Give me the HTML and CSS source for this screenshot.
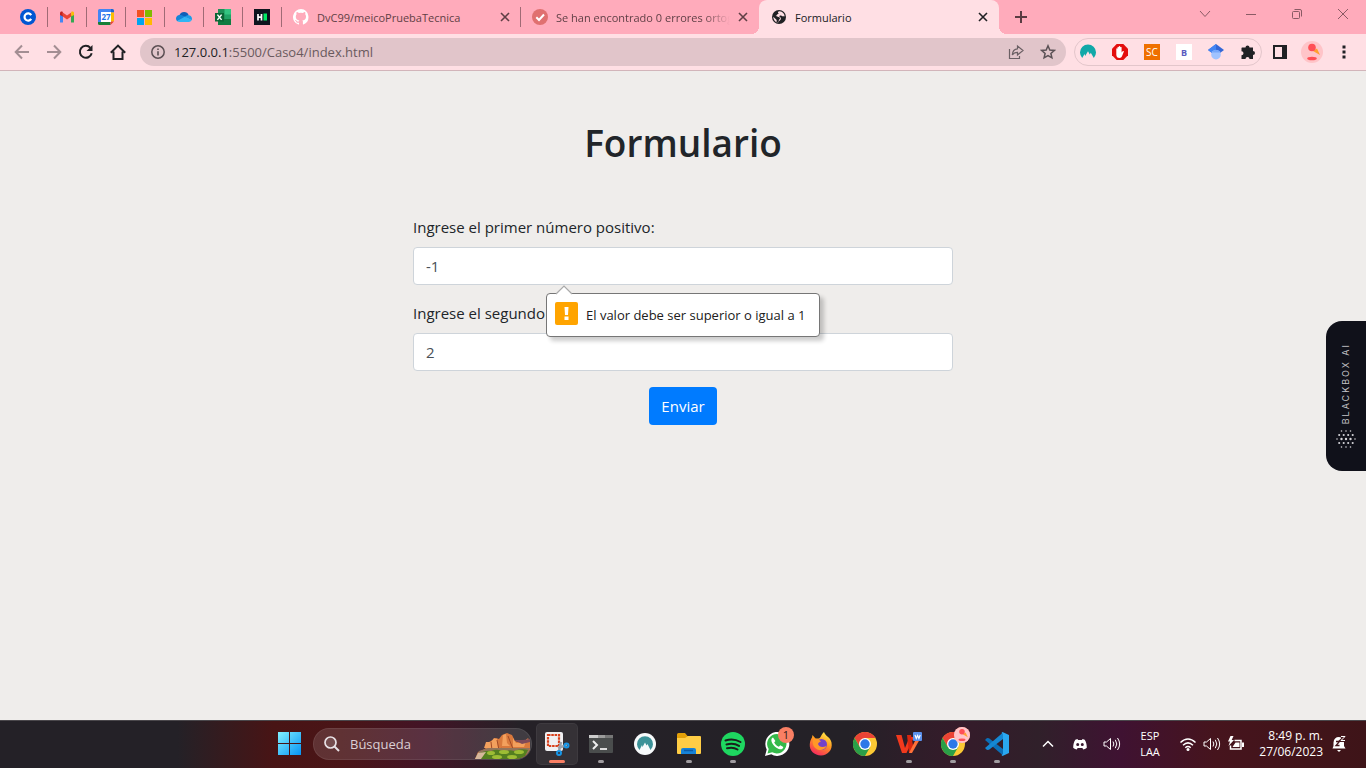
FILE: index.html
```html
<!DOCTYPE html>
<html lang="es">
<head>
<meta charset="utf-8">
<meta name="viewport" content="width=device-width, initial-scale=1">
<title>Formulario</title>
<link rel="stylesheet" href="styles.css">
</head>
<body>
<div class="desktop">

<header class="browser">
  <div class="tabs">
    <button class="pin" aria-label="Coursera"><svg width="16" height="16" viewBox="0 0 16 16"><circle cx="8" cy="8" r="8" fill="#0056d2"/><path d="M11.2 6.1A3.6 3.6 0 1 0 11.2 9.900" fill="none" stroke="#fff" stroke-width="2.200"/></svg></button>
    <button class="pin" aria-label="Gmail"><svg width="16" height="16" viewBox="0 0 16 16"><path d="M1 13.500V4l3 2.200v7.300z" fill="#4285f4"/><path d="M15 13.500V4l-3 2.200v7.300z" fill="#34a853"/><path d="M3.800 3.400 8 6.600l4.200-3.200v4L8 10.600 3.800 7.400z" fill="#ea4335"/><path d="M1 6V4c0-1.600 1.700-2 2.800-1.100v4.500z" fill="#c5221f"/><path d="M15 6V4c0-1.600-1.700-2-2.800-1.100v4.500z" fill="#fbbc04"/></svg></button>
    <button class="pin" aria-label="Calendar"><svg width="16" height="16" viewBox="0 0 16 16"><path d="M0 1.500A1.500 1.500 0 0 1 1.500 0H13v3.500H3.500V13H0z" fill="#4285f4"/><path d="M13 0h1.500A1.500 1.500 0 0 1 16 1.500V3.500h-3z" fill="#1967d2"/><path d="M12.500 3.500H16v9h-3.500z" fill="#fbbc04"/><path d="M0 13h12.500v3h-11A1.500 1.500 0 0 1 0 14.500z" fill="#188038"/><path d="M12.500 12.500H16L12.500 16z" fill="#ea4335"/><path d="M3 3h10v10H3z" fill="#fff"/><text x="8" y="11" text-anchor="middle" class="g-cal">27</text></svg></button>
    <button class="pin" aria-label="Microsoft"><svg width="16" height="16" viewBox="0 0 16 16"><path d="M0 1h7v7H0z" fill="#f25022"/><path d="M8 1h7v7H8z" fill="#7fba00"/><path d="M0 9h7v7H0z" fill="#00a4ef"/><path d="M8 9h7v7H8z" fill="#ffb900"/></svg></button>
    <button class="pin" aria-label="OneDrive"><svg width="16" height="16" viewBox="0 0 16 16"><path d="M3.500 6a5 5 0 0 1 9.200.2L9 9.500 2 11z" fill="#0f5fb8"/><path d="M3.700 6C1.500 6 0 7.700 0 9.600c0 1.200.6 2 1.300 2.700L10 8 6.500 6.500C5.500 6 4.700 6 3.700 6z" fill="#1484d7"/><path d="M12.600 6.200C14.500 6.300 16 7.800 16 9.700c0 .5-.2 1.100-.4 1.500L8.700 7.900c1.100-1 2-1.700 3.900-1.700z" fill="#1b9de8"/><path d="M8.700 7.800 15.700 11c-.6 1.200-1.600 2-3 2H3.800c-1 0-2-.4-2.600-.9z" fill="#31b5f4"/></svg></button>
    <button class="pin" aria-label="Excel"><svg width="16" height="16" viewBox="0 0 16 16"><path d="M3 0h7v16H3z" fill="#1d8f57"/><path d="M9.500 0H16v6H9.500z" fill="#33c481"/><path d="M3 5.500h6.500V10H3z" fill="#17804a"/><path d="M9.500 5.500H16V10H9.500z" fill="#21a366"/><path d="M3 10h13v6H3z" fill="#107c41"/><path d="M0 4h9v8.500H0z" fill="#0b6535"/><path d="m2.400 5.600 4.200 5.300M6.600 5.600l-4.200 5.300" stroke="#fff" stroke-width="1.500"/></svg></button>
    <button class="pin" aria-label="HackerRank"><svg width="16" height="16" viewBox="0 0 16 16"><path d="M0 0h16v16H0z" fill="#0e141e"/><path d="M4 5v6.500M7.500 5v6.500M4 8.200h3.500" stroke="#fff" stroke-width="1.700"/><path d="M9.500 4.500H13v7H9.500z" fill="#00ea64"/></svg></button>
    <div class="tab">
      <svg width="16" height="16" viewBox="0 0 16 16"><path fill="#fff" d="M8 0a8 8 0 0 0-2.500 15.600c.4.100.5-.2.500-.4v-1.500c-2 .5-2.600-.5-2.800-1-.1-.3-.5-1-.9-1.200-.3-.2-.7-.6 0-.6.600 0 1.100.6 1.200.8.700 1.200 1.900.9 2.400.7.100-.5.300-.9.500-1.100-1.800-.2-3.600-.9-3.600-3.900 0-.9.300-1.600.8-2.200-.1-.2-.4-1 .1-2.100 0 0 .7-.2 2.200.8a7.600 7.600 0 0 1 4 0c1.500-1 2.200-.8 2.200-.8.400 1.100.2 1.900.1 2.100.5.600.8 1.300.8 2.200 0 3.100-1.900 3.700-3.700 3.900.3.200.6.700.6 1.500v2.200c0 .2.100.5.500.4A8 8 0 0 0 8 0z"/></svg>
      <span class="tab-title">DvC99/meicoPruebaTecnica</span>
      <button class="x" aria-label="Cerrar pestaña"><svg width="10" height="10" viewBox="0 0 10 10"><path d="m1 1 8 8M9 1 1 9"/></svg></button>
    </div>
    <div class="tab no-line">
      <svg width="16" height="16" viewBox="0 0 16 16"><circle cx="8" cy="8" r="8" fill="#e07070"/><path d="m4.300 8.300 2.700 2.700 5-5.500" fill="none" stroke="#fff" stroke-width="2"/></svg>
      <span class="tab-title fade">Se han encontrado 0 errores ortográficos</span>
      <button class="x" aria-label="Cerrar pestaña"><svg width="10" height="10" viewBox="0 0 10 10"><path d="m1 1 8 8M9 1 1 9"/></svg></button>
    </div>
    <div class="tab active">
      <svg width="16" height="16" viewBox="0 0 16 16"><circle cx="8" cy="8" r="7" fill="#202124"/><path d="M8.600 2.300c-1.800.2-2 1.300-1.200 2 .8.700-.8 1.100-1.400 1.300.1 1-.8 1.200-1.600 1.200l3.800 1.400c1.400.5.800 1.800 0 2.400L7 13.500l-1.500-.5.200-2L2.300 7.700c0 3 2 5.600 4.800 6 .5-1 .6-1.500 1.700-2.200C10.600 10.400 10 8 8.200 7.500c.2-1 .6-.9 1.300-1 .9-.2 1.600.9 2.700.7.700-.1 1.200 0 1.500.2-.2-2.600-2-4.700-5.100-5.100z" fill="#ffdfe4"/></svg>
      <span class="tab-title">Formulario</span>
      <button class="x" aria-label="Cerrar pestaña"><svg width="10" height="10" viewBox="0 0 10 10"><path d="m1 1 8 8M9 1 1 9"/></svg></button>
    </div>
    <button class="new-tab" aria-label="Nueva pestaña"><svg width="12" height="12" viewBox="0 0 12 12"><path d="M6 0v12M0 6h12" stroke="#5a3c42" stroke-width="2"/></svg></button>
    <div class="window-buttons">
      <button aria-label="Buscar pestañas"><svg width="12" height="12" viewBox="0 0 12 12"><path d="m1 3 5 5.500L11 3"/></svg></button>
      <button aria-label="Minimizar"><svg width="12" height="12" viewBox="0 0 12 12"><path d="M1 6.500h10"/></svg></button>
      <button aria-label="Restaurar"><svg width="12" height="12" viewBox="0 0 12 12"><rect x="1.500" y="3.500" width="7" height="7" rx="1"/><path d="M3.500 1.500H9a1.500 1.500 0 0 1 1.500 1.500v5.500"/></svg></button>
      <button aria-label="Cerrar"><svg width="12" height="12" viewBox="0 0 12 12"><path d="m1 1 10 10M11 1 1 11"/></svg></button>
    </div>
  </div>

  <div class="toolbar">
    <button class="tool dim" aria-label="Atrás"><svg width="16" height="16" viewBox="0 0 16 16"><path d="M15 8H2M8 1.500 1.700 8 8 14.500"/></svg></button>
    <button class="tool dim" aria-label="Adelante"><svg width="16" height="16" viewBox="0 0 16 16"><path d="M1 8h13M8 1.500 14.300 8 8 14.500"/></svg></button>
    <button class="tool" aria-label="Recargar"><svg width="16" height="16" viewBox="0 0 16 16"><path d="M13.700 9.300A6 6 0 1 1 12.400 3.800"/><path d="M14.500 1v6h-6z" fill="#202124" stroke="none"/></svg></button>
    <button class="tool" aria-label="Inicio"><svg width="16" height="16" viewBox="0 0 16 16"><path d="M.8 8.800 8 1.600l7.200 7.200M3.500 7.500V15h9V7.500"/></svg></button>
    <div class="omnibox">
      <svg width="14" height="14" viewBox="0 0 14 14"><circle cx="7" cy="7" r="6.200" fill="none" stroke="#5b4f53" stroke-width="1.500"/><path d="M7 6.200v4.300M7 3.400v1.500" stroke="#5b4f53" stroke-width="1.600"/></svg>
      <a class="url" href="#"><span class="host">127.0.0.1</span>:5500/Caso4/index.html</a>
      <button aria-label="Compartir"><svg width="16" height="16" viewBox="0 0 16 16" fill="none" stroke="#6b6064" stroke-width="1.200"><path d="M1.500 5v9.500h10v-2.500"/><path d="M9.500 2v2.800C6 5 4.500 7.500 4.300 11c1.200-2 2.700-2.700 5.200-2.700V11L15 6.500z"/></svg></button>
      <button aria-label="Marcador"><svg width="16" height="16" viewBox="0 0 16 16" fill="none" stroke="#5b5155" stroke-width="1.500"><path d="m8 1.800 1.800 4.200 4.500.4-3.400 3 1 4.400L8 11.500l-3.900 2.300 1-4.400-3.400-3 4.500-.4z"/></svg></button>
    </div>
    <div class="extensions">
      <button aria-label="NordVPN"><svg width="16" height="16" viewBox="0 0 16 16"><path d="M2.200 14A8 8 0 1 1 13.800 14L10.800 8.800 9.800 10.500 8 7.200 5.200 12 4.600 10z" fill="#12a8a8"/></svg></button>
      <button aria-label="AdBlock"><svg width="16" height="16" viewBox="0 0 16 16"><path d="M4.700 0h6.600L16 4.700v6.600L11.300 16H4.700L0 11.300V4.700z" fill="#e40d0d"/><path d="M4.300 8.500V5c0-1 1.200-1 1.200 0V3.500c0-1 1.300-1 1.300 0v-.6c0-1.100 1.400-1.100 1.400 0v.6c0-1 1.400-1 1.400 0v5l1-1.200c.6-.8 1.500-.3 1.200.5l-1.600 4C9.600 13.500 8.700 14 7.500 14c-2 0-3.200-1.300-3.200-3.300z" fill="#fff"/></svg></button>
      <button class="ext-sc" aria-label="SC">SC</button>
      <button class="ext-b" aria-label="B">B</button>
      <button aria-label="Académico"><svg width="16" height="16" viewBox="0 0 16 16"><path d="M8 0 16 6l-4 3H4L0 6z" fill="#3367d6"/><path d="M8 0v9H4L0 6z" fill="#4285f4"/><circle cx="8" cy="10.700" r="4.800" fill="#a0c3ff"/><path d="M3.700 8.500a4.800 4.800 0 0 1 8.600 0z" fill="#76a7fa"/></svg></button>
      <button aria-label="Extensiones"><svg width="16" height="16" viewBox="0 0 16 16"><path d="M2 3.500h3.500a2 2 0 1 1 4 0H13V7a2 2 0 1 1 0 4v4H9.500a2 2 0 0 0-4 0H1.500v-3.700a2 2 0 0 0 0-4V4z" fill="#202124"/></svg></button>
    </div>
    <button class="tool" aria-label="Panel lateral"><svg width="16" height="16" viewBox="0 0 16 16"><path d="M2 2h12v12H2z"/><path d="M10 2h4v12h-4z" fill="#202124" stroke="none"/></svg></button>
    <button class="tool" aria-label="Perfil"><svg width="22" height="22" viewBox="0 0 22 22" stroke="none"><circle cx="11" cy="11" r="11" fill="#ffc4c8" stroke="none"/><path d="m12 10 4-2.500 3 6.500z" fill="#ffa02e" stroke="none"/><circle cx="11" cy="6.500" r="3.800" fill="#ff4f55" stroke="none"/><ellipse cx="11" cy="17.500" rx="4.800" ry="1.800" fill="#ff4f55" stroke="none"/></svg></button>
    <button class="tool" aria-label="Menú"><svg width="16" height="16" viewBox="0 0 16 16"><path d="M6.500 1.500h3v3h-3zM6.500 6.500h3v3h-3zM6.500 11.500h3v3h-3z" fill="#202124" stroke="none"/></svg></button>
  </div>
</header>

<main class="page">
  <h1>Formulario</h1>
  <form class="form" novalidate>
    <div class="field">
      <label for="n1">Ingrese el primer número positivo:</label>
      <input id="n1" type="number" min="1" value="-1">
      <div class="bubble" role="alert">
        <svg class="bubble-tip" width="18" height="10" viewBox="0 0 18 10"><path d="M0 10 9 1l9 9z" fill="#fff"/><path d="M1 9 9 1l8 8" fill="none" stroke="#a9a9a9" stroke-width="1.200"/></svg>
        <svg class="bubble-icon" width="23" height="23" viewBox="0 0 23 23"><rect width="23" height="23" rx="2" fill="#ffa400"/><path d="M9.500 5h4l-.5 8h-3zM9.500 14.500h4V18h-4z" fill="#fff"/></svg>
        <span>El valor debe ser superior o igual a 1</span>
      </div>
    </div>
    <div class="field">
      <label for="n2">Ingrese el segundo número positivo:</label>
      <input id="n2" type="number" min="1" value="2">
    </div>
    <button class="send" type="submit">Enviar</button>
  </form>
  <button class="blackbox">
    <span>BLACKBOX AI</span>
    <svg width="20" height="20" viewBox="0 0 20 20" fill="none" stroke="#d4d4d8" stroke-linecap="round"><path stroke-width="1.600" stroke-dasharray="0 4.500" d="M5.500 2h9.100M5.500 18h9.100"/><path stroke-width="2.100" stroke-dasharray="0 4.500" d="M3.200 6h13.600M3.200 14h13.600"/><path stroke-width="2.400" stroke-dasharray="0 4.500" d="M5.500 10h9.100"/><path stroke-width="1.600" stroke-dasharray="0 18" d="M1 10h18.100"/></svg>
  </button>
</main>

<footer class="taskbar">
  <nav class="apps">
    <button class="app" aria-label="Inicio"><svg width="23" height="23" viewBox="0 0 23 23"><defs><linearGradient id="win" gradientUnits="userSpaceOnUse" x1="0" y1="0" x2="23" y2="23"><stop stop-color="#82f0ff"/><stop offset="1" stop-color="#0594f5"/></linearGradient></defs><path d="M0 0h11v11H0zM12 0h11v11H12zM0 12h11v11H0zM12 12h11v11H12z" fill="url(#win)"/></svg></button>
    <div class="search">
      <svg width="16" height="16" viewBox="0 0 16 16"><circle cx="6.500" cy="6.500" r="5.500" fill="#ffffff22" stroke="#e8e2e6" stroke-width="1.700"/><path d="m10.500 10.500 4.500 4.500" stroke="#e8e2e6" stroke-width="2"/></svg>
      <input type="text" aria-label="Búsqueda" placeholder="Búsqueda">
      <svg class="rocks" width="56" height="26" viewBox="0 0 56 26"><path d="M0 26 3 19l7-3 4-7 7-4 3 1 3-4 5-2 5 2 3 6 3 1 7-1 3-3 2 4v9l-4 8z" fill="#d9793c"/><path d="M11 9h5l3-4 3 1 1 9H9zM28 2l3-1 1 9 3 3h-8zM38 5l3 5 6 0 5-4-3 8-11 0z" fill="#f3a05d"/><path d="m22 7 2 10 3-2M33 3l5 13M16 9l1 8" stroke="#a34a25" fill="none"/><path d="M39 7h9l7-1v3l-8 2z" fill="#7e4a58"/><path d="m4 18 9-3h42l-2 6H3z" fill="#93745a"/><path d="M2 22q8-5 14-4 7-3 13 1 5-3 10-1 7-3 14-1l-3 6-5 3H1z" fill="#547f20"/><g fill="#9dbd34"><ellipse cx="16" cy="20" rx="4" ry="2"/><ellipse cx="29" cy="19" rx="5" ry="2"/><ellipse cx="44" cy="19" rx="5" ry="2"/><ellipse cx="22" cy="24" rx="5" ry="2"/><ellipse cx="37" cy="24" rx="5" ry="2"/></g><path d="m0 26 3-6 8-1-5 7z" fill="#d6b79c"/></svg>
    </div>
    <button class="app current" aria-label="Recortes"><svg width="26" height="26" viewBox="0 0 26 26"><rect x="1" y="1" width="18" height="19" rx="2" fill="#f0f0f2"/><rect x="4" y="4" width="11" height="11" fill="none" stroke="#d8401c" stroke-width="2.200" stroke-dasharray="2.500 .8"/><path d="m15 20 2-9M14 17l9-3" stroke="#9aa0a8" stroke-width="2.500"/><circle cx="15" cy="22" r="2" fill="none" stroke="#1696e8" stroke-width="2"/><circle cx="22.500" cy="14.500" r="2" fill="none" stroke="#1696e8" stroke-width="2"/></svg></button>
    <button class="app open" aria-label="Terminal"><svg width="24" height="24" viewBox="0 0 24 24"><rect y="3" width="24" height="18" rx="1" fill="#4a4d4d"/><path d="M0 3h9v3H0z" fill="#ccc"/><path d="M9 3h7v3H9z" fill="#9b9b9b"/><path d="M16 3h8v3h-8z" fill="#777"/><path d="m4 9 4 4-4 4" fill="none" stroke="#eee" stroke-width="2"/><path d="M11 17h7" stroke="#fff" stroke-width="1.600"/></svg></button>
    <button class="app" aria-label="NordVPN"><svg width="24" height="24" viewBox="0 0 24 24"><circle cx="12" cy="12" r="11" fill="#f7fafb"/><path d="M6.500 18A8 8 0 1 1 17.500 18L14.500 12l-1 1.500L12 10.500 9.500 15 9 13z" fill="#3c9298"/></svg></button>
    <button class="app open" aria-label="Explorador"><svg width="24" height="24" viewBox="0 0 24 24"><path d="M0 2.500Q0 1 1.500 1H8l2.500 3H22v6H0z" fill="#e3a008"/><path d="M0 6h8l3-2h12q1 0 1 1v16q0 1-1 1H1q-1 0-1-1z" fill="#ffcd45"/><path d="M4 22v-4q0-2 2-2h11q2 0 2 2v4z" fill="#1683d8"/><path d="M7 18.500h9" stroke="#0c5aa5" stroke-width="1.500"/></svg></button>
    <button class="app open" aria-label="Spotify"><svg width="24" height="24" viewBox="0 0 24 24"><circle cx="12" cy="12" r="12" fill="#1ed760"/><path d="M4.500 8.500c5-1.500 10.500-1 15 1.500M5.500 12.500c4-1.200 9-.8 12.500 1.400M6 16.300c3.500-.9 7.500-.7 10.500 1.200" fill="none" stroke="#1a1f1c" stroke-width="2" stroke-linecap="round"/></svg></button>
    <button class="app" aria-label="WhatsApp"><svg width="26" height="26" viewBox="0 0 26 26"><path d="m1 25 1.700-6.500A12 12 0 1 1 7.300 23.300z" fill="#fff"/><path d="m3.500 22.500 1.200-4.400a9.700 9.700 0 1 1 3.500 3.200z" fill="#34b94a"/><path d="M9 6.500c-1.200.5-2 1.900-1.500 3.700 1 3.700 5 7.500 8.600 8 1.700.2 3-.8 3.200-2.300l-3-1.700-1.500 1.500c-2.200-.9-3.700-2.400-4.600-4.300l1.200-1.500z" fill="#fff"/></svg><span class="badge">1</span></button>
    <button class="app" aria-label="Firefox"><svg width="24" height="24" viewBox="0 0 24 24"><defs><linearGradient id="fox" x1=".8" y1="0" x2=".3" y2="1"><stop stop-color="#fff14f"/><stop offset=".45" stop-color="#ff9a1f"/><stop offset="1" stop-color="#f6265f"/></linearGradient></defs><path d="M3 5.500 3.500 3l3 3.500h3C12 6 12 2.500 15 0c1 4 6.500 5 7.500 10.500C24 18 18.500 23.500 12 23.500S0 18.500.8 12C1 9 2 7 3 5.500z" fill="url(#fox)"/><circle cx="12.500" cy="12.500" r="5.500" fill="#7442c8"/><path d="M4 7.500c2.500-1.500 5.500-.5 8 2-1 .3-2.500 1-3 2.500 1 3.500 5 3.500 8.500 2-1.500 4-7 5.500-10.500 2.500C4 14.500 3.300 11 4 7.500z" fill="#ff9827"/></svg></button>
    <button class="app" aria-label="Chrome"><svg width="24" height="24" viewBox="0 0 24 24"><circle cx="12" cy="12" r="12" fill="#fcc934"/><path d="M1.600 6A12 12 0 0 1 22.400 6H12L6.800 15z" fill="#ea4335"/><path d="M1.600 6A12 12 0 0 0 12 24l5.200-9H6.800z" fill="#2a9f48"/><circle cx="12" cy="12" r="6" fill="#fff"/><circle cx="12" cy="12" r="4.700" fill="#2d78e8"/></svg></button>
    <button class="app open" aria-label="WPS Office"><svg width="26" height="24" viewBox="0 0 26 24"><path d="M0 3h5.500L9 16l4.500-11H18L10.500 21H6z" fill="#f2391d"/><path d="M11 3h4l2.500 13L15 21h-2z" fill="#d9260f"/><path d="M20 7h4l-8 14h-3z" fill="#ff7038"/><rect x="17" y="0" width="9" height="9" rx="1" fill="#5b91ee"/><path d="m19 3 1.300 3.500 1.300-3 1.300 3L24.200 3" fill="none" stroke="#fff" stroke-width="1.200"/></svg></button>
    <button class="app open" aria-label="Chrome, perfil"><svg width="24" height="24" viewBox="0 0 24 24"><circle cx="12" cy="12" r="12" fill="#fcc934"/><path d="M1.600 6A12 12 0 0 1 22.400 6H12L6.800 15z" fill="#ea4335"/><path d="M1.600 6A12 12 0 0 0 12 24l5.200-9H6.800z" fill="#2a9f48"/><circle cx="12" cy="12" r="6" fill="#fff"/><circle cx="12" cy="12" r="4.700" fill="#2d78e8"/></svg><span class="badge"><svg width="16" height="16" viewBox="0 0 22 22"><circle cx="11" cy="11" r="11" fill="#ffc4c8"/><path d="m12 10 4-2.500 3 6.500z" fill="#ffa02e"/><circle cx="11" cy="6.500" r="3.800" fill="#ff4f55"/><ellipse cx="11" cy="17.500" rx="4.800" ry="1.800" fill="#ff4f55"/></svg></span></button>
    <button class="app open" aria-label="Visual Studio Code"><svg width="24" height="24" viewBox="0 0 24 24"><path d="m0 8 2-2 2 .2L18 17v6.500z" fill="#0b6fb8"/><path d="m0 16 2 2 2-.2L18 7V.5z" fill="#1587d2"/><path d="M17.500 0 24 3v18l-6.500 3-1-1 1.500-1V2l-1.500-1z" fill="#2aa8f0"/></svg></button>
  </nav>
  <div class="tray">
    <button aria-label="Iconos ocultos"><svg width="12" height="12" viewBox="0 0 12 12"><path d="m1 8.500 5-5 5 5" stroke-width="1.500"/></svg></button>
    <button aria-label="Discord"><svg width="14" height="12" viewBox="0 0 14 12"><path fill="#fff" stroke="none" fill-rule="evenodd" d="M4.500 1 2.300 1.800C.8 4 .2 6.800.2 9.800 1.500 11 2.800 11.300 3.800 11.500l.8-1.400h4.800l.8 1.400c1-.2 2.300-.5 3.600-1.700 0-3-.6-5.800-2.100-8L9.500 1 9 2H5zM4.700 5a1.500 1.500 0 1 1 0 3 1.500 1.500 0 0 1 0-3zm4.600 0a1.500 1.500 0 1 1 0 3 1.500 1.500 0 0 1 0-3z"/></svg></button>
    <button aria-label="Volumen"><svg width="18" height="16" viewBox="0 0 18 16"><path d="M1 6v4h2.500L7.500 13.500v-11L3.500 6zM10 5.500q1.700 2.500 0 5M12.300 3.800q3 4.200 0 8.400M14.500 2q4.300 6 0 12"/></svg></button>
    <button class="lang">ESP<br>LAA</button>
    <div class="status">
      <svg width="18" height="16" viewBox="0 0 18 16"><path d="M1.500 6.500q7.500-7 15 0M4 9.200q5-4.600 10 0M6.300 11.700q2.700-2.500 5.400 0" stroke-width="1.500"/><circle cx="9" cy="13.500" r="1.500" fill="#fff" stroke="none"/></svg>
      <svg width="18" height="16" viewBox="0 0 18 16"><path d="M1 6v4h2.500L7.500 13.500v-11L3.500 6zM10 5.500q1.700 2.500 0 5M12.300 3.800q3 4.200 0 8.400M14.500 2q4.300 6 0 12"/></svg>
      <svg width="18" height="16" viewBox="0 0 18 16"><path d="M7.500 4.500H14V13H3.500V9.500" stroke-width="1.500"/><path d="M8.500 6.500h4V11h-7zM15 6.500h2V11h-2zM3.500 0 1 5.500h2L1.500 10 7 4H4.700L6.500 0z" fill="#fff" stroke="none"/></svg>
    </div>
    <div class="clock">8:49 p. m.<br>27/06/2023</div>
    <button class="bell" aria-label="Notificaciones"><svg width="16" height="18" viewBox="0 0 16 18"><path d="M2.500 11V7.500Q3 2 8 2q4.500.5 5 5.500V11l1.500 2.500h-13z" fill="#fff" stroke="none"/><path d="M6 15h4l-2 2z" fill="#fff" stroke="none"/><path d="M5 6.500h3.500L5 10.500h3.500" stroke="#43161c" stroke-width="1.300"/><path d="M10 1.500h4l-4 4h4" stroke="#43161c" stroke-width="3"/><path d="M10 1.500h4l-4 4h4"/></svg></button>
  </div>
</footer>
</div>
</body>
</html>
```

FILE: styles.css
```css
* { box-sizing: border-box; }

body {
  margin: 0;
  font-family: "Open Sans", "Noto Sans", sans-serif;
  color: #212529;
}

button {
  border: 0;
  padding: 0;
  background: none;
  color: inherit;
  font: inherit;
}

svg { flex: none; }

.desktop {
  display: flex;
  flex-direction: column;
  min-height: 100vh;
}

/* Tab strip */
.tabs {
  display: flex;
  height: 34px;
  padding-left: 9px;
  background: #ffabbb;
  font-size: 11px;
  color: #5f3f45;
}

.pin {
  display: flex;
  align-items: center;
  justify-content: center;
  width: 39px;
  margin: 7px 0;
  border-right: 1px solid #a06a75;
}

.g-cal {
  font-size: 8px;
  font-weight: 700;
  fill: #1a73e8;
}

.tab {
  position: relative;
  display: flex;
  align-items: center;
  gap: 8px;
  flex: 0 1 239px;
  min-width: 0;
  margin: 7px 0;
  padding: 0 10px 0 11px;
  border-right: 1px solid #a06a75;
}

.tab.no-line {
  flex-basis: 238px;
  border-right-color: transparent;
}

.tab.active {
  flex-basis: 240px;
  margin: 0;
  padding: 0 11px 0 12px;
  border: 0;
  border-radius: 8px 8px 0 0;
  background: #ffdfe4;
  color: #202124;
}

.tab.active::before,
.tab.active::after {
  content: "";
  position: absolute;
  bottom: 0;
  width: 8px;
  height: 8px;
}

.tab.active::before {
  left: -8px;
  background: radial-gradient(circle at 0 0, transparent 8px, #ffdfe4 8px);
}

.tab.active::after {
  right: -8px;
  background: radial-gradient(circle at 100% 0, transparent 8px, #ffdfe4 8px);
}

.tab-title {
  flex: 1;
  overflow: hidden;
  white-space: nowrap;
}

.fade { mask-image: linear-gradient(to right, #000 85%, transparent); }

.x { display: flex; }

.x path {
  stroke: currentColor;
  stroke-width: 1.6;
}

.new-tab {
  display: flex;
  align-items: center;
  justify-content: center;
  width: 44px;
}

.window-buttons {
  display: flex;
  margin-left: auto;
  padding-bottom: 6px;
}

.window-buttons button {
  display: flex;
  align-items: center;
  justify-content: center;
  width: 46px;
}

.window-buttons path,
.window-buttons rect {
  fill: none;
  stroke: #8a5a64;
}

/* Toolbar */
.toolbar {
  display: flex;
  align-items: center;
  height: 37px;
  padding: 0 6px;
  border-bottom: 1px solid #d2b5ba;
  background: #ffdfe4;
}

.tool {
  display: flex;
  align-items: center;
  justify-content: center;
  width: 32px;
  height: 28px;
}

.tool svg {
  fill: none;
  stroke: #202124;
  stroke-width: 2;
}

.tool.dim svg { stroke: #a38e93; }

.omnibox {
  display: flex;
  align-items: center;
  flex: 1;
  gap: 9px;
  height: 28px;
  margin: 0 8px 0 6px;
  padding: 0 10px 0 11px;
  border-radius: 14px;
  background: #e1c5ca;
}

.omnibox button {
  display: flex;
  margin-left: 7px;
}

.url {
  flex: 1;
  font-size: 13px;
  color: #6a5a5e;
  text-decoration: none;
}

.host { color: #202124; }

.extensions {
  display: flex;
  align-items: center;
  gap: 16px;
  height: 28px;
  margin-right: 2px;
  padding: 0 5px;
  border: 1px solid #e3c6cb;
  border-radius: 14px;
}

.extensions button {
  display: flex;
  align-items: center;
  justify-content: center;
  width: 16px;
  height: 16px;
}

.extensions .ext-sc {
  background: #ef7000;
  color: #fff;
  font-size: 10px;
}

.extensions .ext-b {
  background: #fff;
  color: #5a5ac0;
  font-size: 9px;
  font-weight: 700;
}

/* Page */
.page {
  flex: 1;
  padding: 48px 15px;
  background: #efedeb;
}

h1 {
  margin: 0 0 48px;
  font-size: 37px;
  font-weight: 600;
  line-height: 48px;
  text-align: center;
}

.form {
  display: flex;
  flex-direction: column;
  gap: 16px;
  max-width: 540px;
  margin: 0 auto;
  font-size: 15px;
  line-height: 24px;
}

.field {
  position: relative;
  display: flex;
  flex-direction: column;
  gap: 8px;
}

.field input {
  width: 100%;
  height: 38px;
  padding: 6px 12px;
  border: 1px solid #ced4da;
  border-radius: 4px;
  background: #fff;
  color: #495057;
  font: inherit;
}

.bubble {
  position: absolute;
  z-index: 1;
  top: 78px;
  left: 133px;
  display: flex;
  align-items: center;
  gap: 8px;
  min-width: 274px;
  height: 44px;
  padding: 0 8px;
  border: 1px solid #767676;
  border-radius: 4px;
  background: #fff;
  box-shadow: 4px 4px 4px #0003;
  color: #202020;
  font-size: 13px;
  white-space: nowrap;
}

.bubble-icon { margin-bottom: 3px; }

.bubble-tip {
  position: absolute;
  top: -9px;
  left: 8px;
}

.send {
  align-self: center;
  height: 38px;
  padding: 0 12px;
  border-radius: 4px;
  background: #007bff;
  color: #fff;
}

.blackbox {
  position: fixed;
  top: 321px;
  right: 0;
  display: flex;
  flex-direction: column;
  align-items: center;
  justify-content: center;
  gap: 4px;
  width: 40px;
  height: 150px;
  border-radius: 16px 0 0 16px;
  background: #10111a;
  color: #c4c4c8;
  font-family: Inter, sans-serif;
  font-size: 9px;
  line-height: 12px;
}

.blackbox span {
  writing-mode: vertical-rl;
  transform: rotate(180deg);
  letter-spacing: 2px;
}

/* Taskbar */
.taskbar {
  display: flex;
  justify-content: flex-end;
  gap: 13px;
  height: 48px;
  padding: 0 15px 2px 0;
  border-top: 1px solid #4a474b;
  background: linear-gradient(to right, #242127 13%, #481415 20%, #4a1517 25%, #431426 31%, #252127 38%, #242127 62%, #351b2a 70%, #30202a 76%, #3f1232 82%, #46141d 89%, #3e1418 100%);
  color: #fff;
}

.apps {
  display: flex;
  align-items: center;
}

.app {
  position: relative;
  display: flex;
  align-items: center;
  justify-content: center;
  width: 40px;
  height: 40px;
  margin: 0 2px;
  border-radius: 4px;
}

.app.current {
  background: #353136;
  box-shadow: 0 0 0 1px #3e3a3f;
}

.app.open::after,
.app.current::after {
  content: "";
  position: absolute;
  bottom: 1px;
  width: 6px;
  height: 3px;
  border-radius: 2px;
  background: #a09ca0;
}

.app.current::after {
  width: 16px;
  background: #f97f64;
}

.badge {
  position: absolute;
  top: 3px;
  right: 3px;
  width: 16px;
  height: 16px;
  border-radius: 8px;
  background: #f97f64;
  color: #2b1a1a;
  font-size: 11px;
  line-height: 16px;
}

.badge svg { display: block; }

.search {
  display: flex;
  align-items: center;
  gap: 10px;
  width: 219px;
  height: 32px;
  margin: 0 3px 0 2px;
  padding-left: 10px;
  border: 1px solid #ffffff14;
  border-radius: 16px;
  background: #ffffff20;
  overflow: hidden;
}

.search input {
  flex: 1;
  min-width: 0;
  padding: 0;
  border: 0;
  background: none;
  color: #fff;
  font: 13px "Open Sans", sans-serif;
}

.search input::placeholder { color: #dccfd5; }

.rocks { align-self: flex-end; }

.tray {
  display: flex;
  align-items: center;
  font-size: 11px;
  line-height: 16px;
}

.tray button {
  display: flex;
  align-items: center;
  justify-content: center;
  width: 32px;
  height: 40px;
}

.tray svg {
  fill: none;
  stroke: #fff;
}

.tray .lang { width: 44px; }

.status {
  display: flex;
  gap: 6px;
  padding: 0 3px 0 7px;
}

.clock {
  width: 75px;
  font-size: 12px;
  text-align: right;
  white-space: nowrap;
}

.tray .bell {
  width: 24px;
  margin-left: 4px;
}
```
